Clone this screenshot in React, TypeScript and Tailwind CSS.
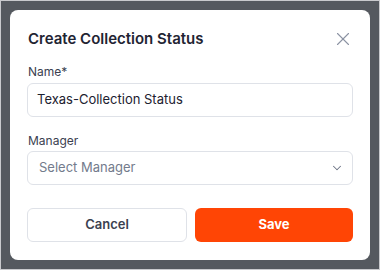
import { X, ChevronDown } from "lucide-react";

export default function App() {
  return (
    <div
      className="h-[270px] w-[380px] border border-[#c9cacd] bg-[#55595f] p-[9px]"
      style={{ fontFamily: "Inter, 'Noto Sans', sans-serif" }}
    >
      <div className="flex h-[250px] w-[360px] flex-col rounded-lg bg-white px-[17px] pt-[19px]">
        {/* header */}
        <div className="flex h-5 items-center justify-between pl-px">
          <h2 className="text-[15px] leading-5 font-semibold text-[#1f2433]">
            Create Collection Status
          </h2>
          <X className="-mr-px h-[22px] w-[22px] text-[#8c93a3]" strokeWidth={1.2} />
        </div>

        {/* name */}
        <label className="mt-[15px] mb-[3px] pl-px text-xs leading-4 text-[#3b4150]">Name*</label>
        <div className="flex h-[34px] items-center rounded-md border border-[#dfe2e8] px-[9px] text-[13px] text-[#1c2130]">
          Texas-Collection Status
        </div>

        {/* manager */}
        <label className="mt-4 mb-[2px] pl-px text-xs leading-4 text-[#3b4150]">Manager</label>
        <div className="flex h-[34px] items-center justify-between rounded-md border border-[#dfe2e8] pr-[9px] pl-[11px] text-[13px] text-[#737b8c]">
          <span>Select Manager</span>
          <ChevronDown className="-mr-[1px] h-[14px] w-[14px] text-[#6b7384]" strokeWidth={1.75} />
        </div>

        {/* actions */}
        <div className="mt-[23px] flex gap-2">
          <button className="h-[34px] w-[160px] rounded-md border border-[#dfe2e8] bg-white text-[13px] font-semibold text-[#3b4150]">
            Cancel
          </button>
          <button className="h-[34px] flex-1 rounded-md bg-[#ff4505] text-[13px] font-bold text-white">
            Save
          </button>
        </div>
      </div>
    </div>
  );
}
